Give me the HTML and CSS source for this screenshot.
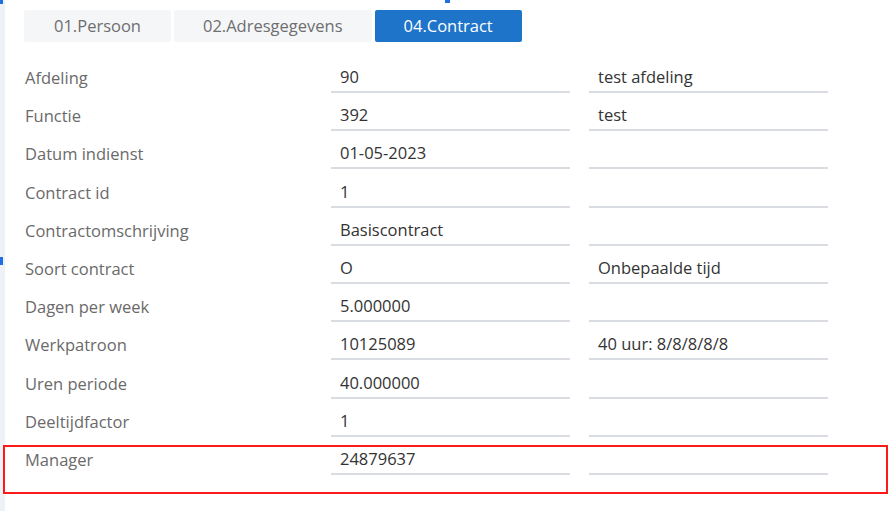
FILE: index.html
```html
<!DOCTYPE html>
<html lang="nl">
<head>
<meta charset="utf-8">
<title>Contract</title>
<link rel="stylesheet" href="styles.css">
</head>
<body>
<div class="page">
  <div class="edge"></div>
  <span class="mark mark-a"></span>
  <span class="mark mark-b"></span>
  <span class="mark mark-c"></span>
  <div class="content">
    <nav class="tabs">
      <div class="tab">01.Persoon</div>
      <div class="tab">02.Adresgegevens</div>
      <div class="tab active">04.Contract</div>
    </nav>
    <div class="form">
      <div class="row"><div class="label">Afdeling</div><div class="field">90</div><div class="field">test afdeling</div></div>
      <div class="row"><div class="label">Functie</div><div class="field">392</div><div class="field">test</div></div>
      <div class="row"><div class="label">Datum indienst</div><div class="field">01-05-2023</div><div class="field"></div></div>
      <div class="row"><div class="label">Contract id</div><div class="field">1</div><div class="field"></div></div>
      <div class="row"><div class="label">Contractomschrijving</div><div class="field">Basiscontract</div><div class="field"></div></div>
      <div class="row"><div class="label">Soort contract</div><div class="field">O</div><div class="field">Onbepaalde tijd</div></div>
      <div class="row"><div class="label">Dagen per week</div><div class="field">5.000000</div><div class="field"></div></div>
      <div class="row"><div class="label">Werkpatroon</div><div class="field">10125089</div><div class="field">40 uur: 8/8/8/8/8</div></div>
      <div class="row"><div class="label">Uren periode</div><div class="field">40.000000</div><div class="field"></div></div>
      <div class="row"><div class="label">Deeltijdfactor</div><div class="field">1</div><div class="field"></div></div>
      <div class="row"><div class="label">Manager</div><div class="field">24879637</div><div class="field"></div></div>
    </div>
  </div>
  <div class="highlight"></div>
</div>
</body>
</html>
```

FILE: styles.css
```css
html, body {
  margin: 0;
  padding: 0;
  background: #ffffff;
}
body {
  font-family: "Open Sans", "Liberation Sans", sans-serif;
  font-size: 16.5px;
  width: 892px;
  height: 511px;
  overflow: hidden;
}
.page {
  position: relative;
  display: flex;
  height: 511px;
}
.edge {
  width: 5px;
  flex: 0 0 5px;
  background: #eef1f5;
}
.mark {
  position: absolute;
  background: #1f6fe0;
}
.mark-a { left: 0; top: 0; width: 3px; height: 4px; }
.mark-b { left: 0; top: 257px; width: 3px; height: 8px; }
.mark-c { left: 445px; top: 0; width: 5px; height: 3px; }
.content {
  flex: 1;
  padding: 10px 0 0 19px;
}
.tabs {
  display: flex;
  gap: 3px;
  height: 32px;
}
.tab {
  display: flex;
  align-items: center;
  justify-content: center;
  padding: 0 29px;
  background: #f5f6f8;
  color: #6e6e6e;
  border-radius: 2px;
  line-height: 22px;
}
.tab:first-child {
  padding: 0 30px;
}
.tab.active {
  background: #1d74c9;
  color: #ffffff;
}
.form {
  padding-top: 13px;
}
.row {
  display: grid;
  grid-template-columns: 288px 239px 239px;
  column-gap: 19px;
  height: 38.2px;
}
.label {
  color: #6a6a6a;
  padding-top: 12px;
  line-height: 22px;
  padding-left: 1px;
}
.field {
  color: #333333;
  padding: 11px 0 0 9px;
  line-height: 22px;
  border-bottom: 2px solid #d9dde2;
  box-sizing: border-box;
  height: 38px;
}
.highlight {
  position: absolute;
  left: 3px;
  top: 445px;
  width: 885px;
  height: 49px;
  border: 2px solid #ff1a1a;
  box-sizing: border-box;
}
```
